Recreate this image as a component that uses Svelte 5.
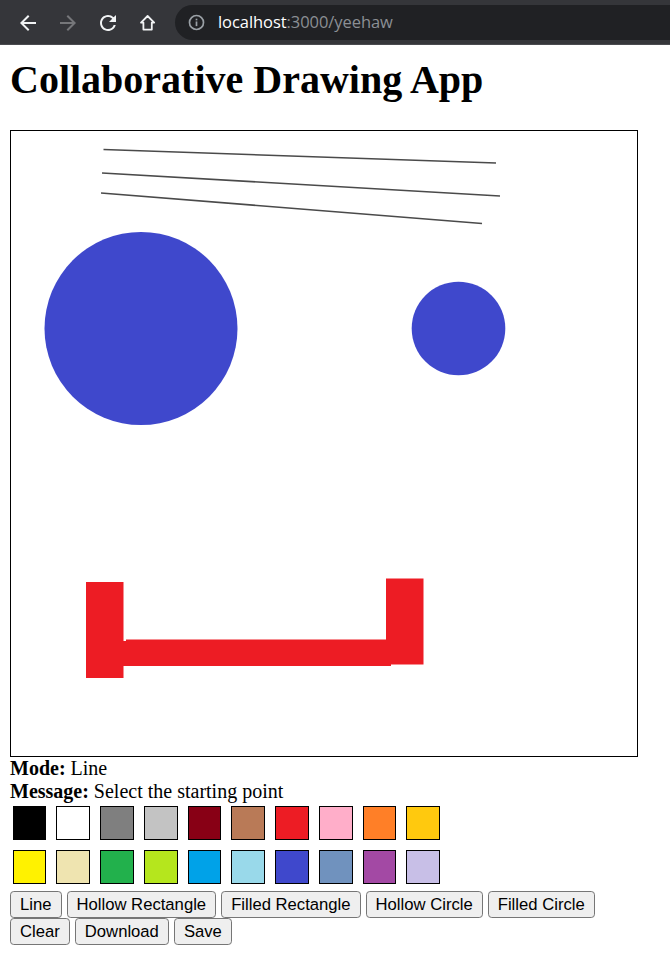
<script>
  const swatches = [
    '#000000', '#ffffff', '#7f7f7f', '#c3c3c3', '#880015', '#b97a57', '#ed1c24', '#ffaec9', '#ff7f27', '#ffc90e',
    '#fff200', '#efe4b0', '#22b14c', '#b5e61d', '#00a2e8', '#99d9ea', '#3f48cc', '#7092be', '#a349a4', '#c8bfe7'
  ];
  const tools = ['Line', 'Hollow Rectangle', 'Filled Rectangle', 'Hollow Circle', 'Filled Circle', 'Clear', 'Download', 'Save'];
</script>

<header class="chrome">
  <nav class="nav">
    <svg class="icon" viewBox="0 0 24 24"><path d="M20 11H7.83l5.59-5.59L12 4l-8 8 8 8 1.41-1.41L7.83 13H20v-2z" /></svg>
    <svg class="icon dim" viewBox="0 0 24 24"><path d="M4 11h12.17l-5.59-5.59L12 4l8 8-8 8-1.41-1.41L16.17 13H4v-2z" /></svg>
    <svg class="icon" viewBox="0 0 24 24"><path d="M17.65 6.35A7.958 7.958 0 0012 4c-4.42 0-7.99 3.58-7.99 8s3.57 8 7.99 8c3.73 0 6.84-2.55 7.73-6h-2.08A5.99 5.99 0 0112 18c-3.31 0-6-2.69-6-6s2.69-6 6-6c1.66 0 3.14.69 4.22 1.78L13 11h7V4l-2.35 2.35z" /></svg>
    <svg class="icon" viewBox="0 0 24 24"><path class="home" d="M11.6 5 5 11.6H7.4V18.6H15.8V11.6H18.2L11.6 5z" /></svg>
  </nav>
  <div class="omnibox">
    <svg class="info" viewBox="0 0 16 16">
      <circle cx="8" cy="8" r="6.6" fill="none" stroke="#9aa0a6" stroke-width="1.6" />
      <rect x="7.2" y="7" width="1.6" height="4.4" fill="#9aa0a6" />
      <rect x="7.2" y="4.4" width="1.6" height="1.6" fill="#9aa0a6" />
    </svg>
    <span class="url"><span class="host">localhost</span>:3000/yeehaw</span>
  </div>
</header>

<main class="page">
  <h1>Collaborative Drawing App</h1>

  <div class="board">
    <svg viewBox="11 131 626 625" width="626" height="625">
      <g class="ink">
        <line x1="103.5" y1="149.5" x2="496" y2="163" />
        <line x1="102" y1="173" x2="500" y2="196" />
        <line x1="101" y1="193" x2="482" y2="223.5" />
      </g>
      <circle cx="141" cy="328.5" r="96.5" fill="#3f48cc" />
      <circle cx="458.5" cy="328.5" r="46.8" fill="#3f48cc" />
      <g fill="#ed1c24">
        <rect x="86" y="582" width="37.5" height="96" />
        <rect x="386" y="578.5" width="37.5" height="86" />
        <rect x="126" y="639.5" width="265" height="26.5" />
        <rect x="123" y="641" width="4" height="25" />
      </g>
    </svg>
  </div>

  <div class="line"><strong>Mode:</strong> Line</div>
  <div class="line"><strong>Message:</strong> Select the starting point</div>

  <div class="swatches">
    {#each swatches as color}
      <button class="swatch" style:background-color={color} aria-label={color}></button>
    {/each}
  </div>

  <div class="tools">
    {#each tools as tool}
      <button class="tool">{tool}</button>
    {/each}
  </div>
</main>

<style>
  :global(body) {
    margin: 0;
    background: #fff;
    color: #000;
    font-family: "Liberation Serif", "Times New Roman", serif;
  }

  .chrome {
    display: flex;
    align-items: center;
    height: 45px;
    box-sizing: border-box;
    padding: 5px 0 4px;
    background: #35363a;
    border-bottom: 1px solid #4a4b4f;
    overflow: hidden;
  }

  .nav {
    display: flex;
    gap: 16px;
    width: 175px;
    box-sizing: border-box;
    padding-left: 16px;
    flex: none;
  }

  .icon {
    width: 24px;
    height: 24px;
    fill: #f1f3f4;
  }

  .icon.dim {
    fill: #76777a;
  }

  .icon .home {
    fill: none;
    stroke: #f1f3f4;
    stroke-width: 1.8;
    stroke-linejoin: round;
  }

  .omnibox {
    flex: 1;
    display: flex;
    align-items: center;
    gap: 13px;
    align-self: stretch;
    margin-right: -30px;
    padding-left: 13px;
    background: #202124;
    border-radius: 18px;
  }

  .info {
    width: 17px;
    height: 17px;
    flex: none;
  }

  .url {
    font-family: "Open Sans", "Noto Sans", sans-serif;
    font-size: 16.5px;
    line-height: 20px;
    padding-bottom: 1px;
    color: #8b8f94;
    letter-spacing: -0.06px;
  }

  .host {
    color: #fff;
  }

  .page {
    padding: 0 10px;
  }

  h1 {
    margin: 12px 0 27px;
    font-size: 40px;
    line-height: 46px;
    font-weight: bold;
  }

  .board {
    width: 626px;
    height: 625px;
    border: 1px solid #000;
  }

  .board svg {
    display: block;
  }

  .ink line {
    stroke: #4a4a4a;
    stroke-width: 1.6;
  }

  .line {
    font-size: 20px;
    line-height: 23px;
  }

  .swatches {
    display: grid;
    grid-template-columns: repeat(10, 33.75px);
    gap: 10px;
    padding: 3px 2.5px 7px;
  }

  .swatch {
    width: 33.75px;
    height: 33.75px;
    box-sizing: border-box;
    padding: 0;
    border: 1.25px solid #000;
    border-radius: 0;
    display: block;
  }

  .tools {
    display: flex;
    flex-wrap: wrap;
    column-gap: 5px;
    width: 628px;
  }

  .tool {
    height: 27.3px;
    box-sizing: border-box;
    padding: 1px 9px 0;
    font-family: "Liberation Sans", Arial, sans-serif;
    font-size: 16.67px;
    color: #000;
    background: #efefef;
    border: 1.25px solid #767676;
    border-radius: 3.75px;
  }
</style>
